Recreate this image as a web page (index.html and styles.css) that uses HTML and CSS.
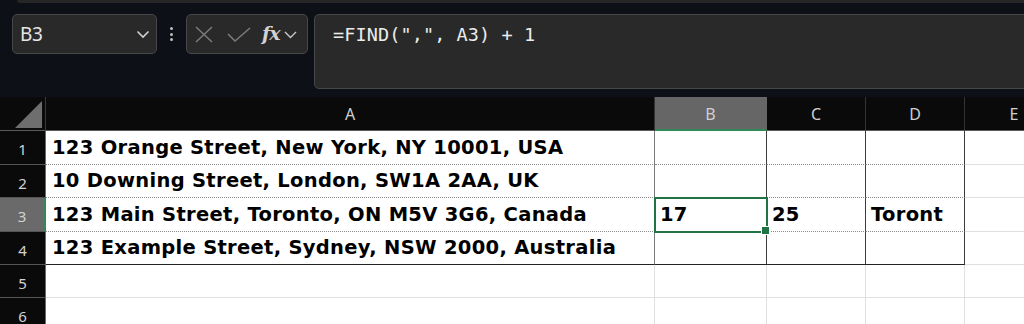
FILE: index.html
```html
<!DOCTYPE html>
<html>
<head>
<meta charset="utf-8">
<link rel="stylesheet" href="styles.css">
</head>
<body>
<div class="ribbon-edge"></div>
<div class="toolbar">
  <div class="namebox">
    <span class="ref">B3</span>
    <svg class="chev" width="14" height="9" viewBox="0 0 14 9"><polyline points="1.5,1.5 7,7 12.5,1.5" fill="none" stroke="#d0d0d0" stroke-width="1.6"/></svg>
  </div>
  <div class="dots"><span></span><span></span><span></span></div>
  <div class="fbuttons">
    <svg class="ic-x" width="18" height="17" viewBox="0 0 18 17"><path d="M1 1 L17 16 M17 1 L1 16" stroke="#7b7b7b" stroke-width="1.5" fill="none"/></svg>
    <svg class="ic-check" width="24" height="15" viewBox="0 0 24 15"><polyline points="1,7 8,14 23,1" fill="none" stroke="#7b7b7b" stroke-width="1.5"/></svg>
    <span class="fx">fx</span>
    <svg class="chev2" width="13" height="8" viewBox="0 0 13 8"><polyline points="1,1 6.5,6.5 12,1" fill="none" stroke="#c8c8c8" stroke-width="1.4"/></svg>
  </div>
  <div class="formula">=FIND(",", A3) + 1</div>
</div>
<div class="sheet">
  <div class="corner"><div class="tri"></div></div>
  <div class="ch">A</div>
  <div class="ch sel">B</div>
  <div class="ch">C</div>
  <div class="ch">D</div>
  <div class="ch">E</div>

  <div class="rh">1</div>
  <div class="c a dot">123 Orange Street, New York, NY 10001, USA</div>
  <div class="c b dot"></div>
  <div class="c b dot"></div>
  <div class="c b dot"></div>
  <div class="c e"></div>

  <div class="rh">2</div>
  <div class="c a dot">10 Downing Street, London, SW1A 2AA, UK</div>
  <div class="c b dot"></div>
  <div class="c b dot"></div>
  <div class="c b dot"></div>
  <div class="c e"></div>

  <div class="rh sel">3</div>
  <div class="c a dot">123 Main Street, Toronto, ON M5V 3G6, Canada</div>
  <div class="c b dot active">17</div>
  <div class="c b dot">25</div>
  <div class="c b dot">Toront</div>
  <div class="c e"></div>

  <div class="rh">4</div>
  <div class="c a last">123 Example Street, Sydney, NSW 2000, Australia</div>
  <div class="c b last"></div>
  <div class="c b last"></div>
  <div class="c b last"></div>
  <div class="c e"></div>

  <div class="rh">5</div>
  <div class="c e"></div>
  <div class="c e"></div>
  <div class="c e"></div>
  <div class="c e"></div>
  <div class="c e"></div>

  <div class="rh">6</div>
  <div class="c e"></div>
  <div class="c e"></div>
  <div class="c e"></div>
  <div class="c e"></div>
  <div class="c e"></div>
</div>
</body>
</html>
```
FILE: styles.css
```css
* { box-sizing: border-box; }
html, body {
  margin: 0;
  padding: 0;
  background: #0d1016;
  width: 1024px;
  height: 324px;
  overflow: hidden;
}
.ribbon-edge {
  height: 3px;
  margin-left: 17px;
  background: #262626;
  border-bottom-left-radius: 5px;
}
.toolbar {
  display: flex;
  align-items: flex-start;
  margin-top: 11px;
  padding-left: 12px;
  height: 74px;
}
.namebox {
  width: 145px;
  height: 40px;
  background: #292929;
  border: 1px solid #474747;
  border-radius: 5px;
  display: flex;
  align-items: center;
  justify-content: space-between;
  padding: 0 6px 0 7px;
}
.ref {
  font-family: "Noto Sans", sans-serif;
  font-size: 19px;
  color: #e6e6e6;
  letter-spacing: -0.3px;
}
.chev { margin-top: 1px; }
.dots {
  width: 29px;
  height: 40px;
  display: flex;
  flex-direction: column;
  align-items: center;
  justify-content: center;
  gap: 2.5px;
}
.dots span {
  width: 3px;
  height: 3px;
  border-radius: 50%;
  background: #bdbdbd;
}
.fbuttons {
  width: 122px;
  height: 40px;
  background: #292929;
  border: 1px solid #474747;
  border-radius: 5px;
  display: flex;
  align-items: center;
  padding-left: 8px;
}
.ic-x { margin-right: 14px; }
.ic-check { margin-right: 11px; }
.fx {
  font-family: "DejaVu Serif", serif;
  font-style: italic;
  font-weight: bold;
  font-size: 19px;
  color: #d2d2d2;
  margin-top: -2px;
  margin-right: 4px;
  letter-spacing: -1px;
}
.chev2 { margin-top: 1px; }
.formula {
  flex: 1;
  margin-left: 6px;
  margin-right: -20px;
  height: 75px;
  background: #292929;
  border: 1px solid #474747;
  border-radius: 5px;
  font-family: "DejaVu Sans Mono", monospace;
  font-size: 18.5px;
  color: #ececec;
  padding: 9px 0 0 18px;
  letter-spacing: 0.1px;
}
.sheet {
  margin-top: 9px;
  display: grid;
  grid-template-columns: 46px 609px 112px 99px 99px 99px;
  grid-template-rows: 34px 34px 33px 34px 33px 33px 34px;
  width: 1064px;
}
.corner {
  background: #0a0a0a;
  border-right: 1px solid #3a3a3a;
  border-bottom: 1px solid #5a5a5a;
  position: relative;
}
.tri {
  position: absolute;
  right: 3px;
  bottom: 2px;
  width: 27px;
  height: 27px;
  background: #6e6e6e;
  clip-path: polygon(100% 0, 100% 100%, 0 100%);
}
.ch {
  background: #0a0a0a;
  color: #cfcfcf;
  font-family: "Noto Sans", sans-serif;
  font-size: 16px;
  display: flex;
  align-items: center;
  justify-content: center;
  border-right: 1px solid #333;
  border-bottom: 1px solid #5a5a5a;
  padding-top: 1px;
}
.ch.sel {
  background: #666;
  border-bottom: 2px solid #2f8a57;
  border-right-color: #666;
}
.rh {
  background: #0a0a0a;
  color: #d2d2d2;
  font-family: "Noto Sans", sans-serif;
  font-size: 15px;
  display: flex;
  align-items: center;
  justify-content: center;
  border-bottom: 1px solid #555;
  border-right: 1px solid #6a6a6a;
  padding-top: 3px;
}
.rh.sel {
  background: #6a6a6a;
  border-right: 2px solid #2f8a57;
}
.c {
  background: #fff;
  font-family: "DejaVu Sans", sans-serif;
  font-weight: bold;
  font-size: 19.5px;
  letter-spacing: 0.3px;
  color: #000;
  display: flex;
  align-items: flex-end;
  padding: 0 0 5px 6px;
  white-space: nowrap;
  overflow: visible;
  line-height: 22px;
}
.c.a { border-right: 1px solid #7a7a7a; }
.c.b { border-right: 1px solid #3c3c3c; padding-left: 5px; }
.c.dot { border-bottom: 1px dotted #8a8a8a; }
.c.last { border-bottom: 1px solid #222; }
.c.e {
  border-right: 1px solid #e0e0e0;
  border-bottom: 1px solid #e0e0e0;
}
.c.active {
  position: relative;
  z-index: 1;
  outline: 2px solid #217346;
  outline-offset: -1px;
}
.c.active::after {
  content: "";
  position: absolute;
  right: -4px;
  bottom: -4px;
  width: 7px;
  height: 7px;
  background: #217346;
  border: 1px solid #fff;
}
```
